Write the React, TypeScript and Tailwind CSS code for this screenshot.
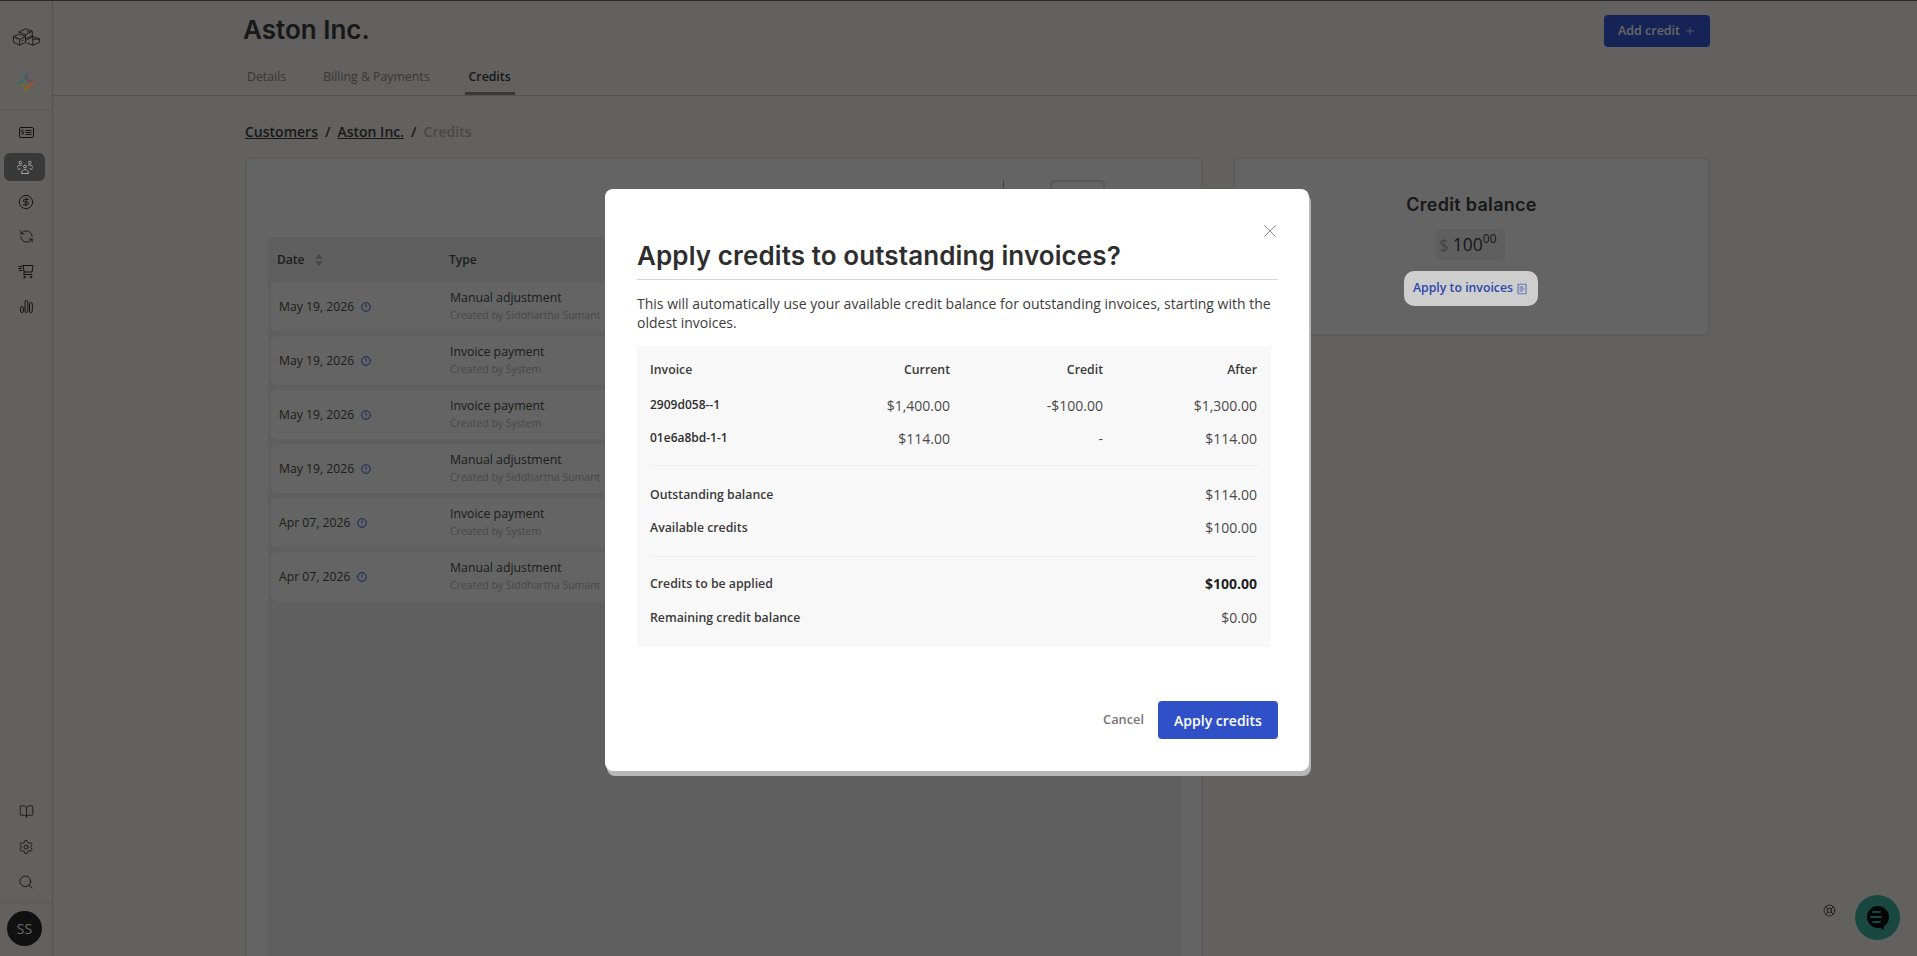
import React from "react";
import {
  BookOpen,
  CircleDollarSign,
  LifeBuoy,
  Plus,
  ReceiptText,
  RefreshCcw,
  Search,
  Settings,
  X,
} from "lucide-react";

const rows = [
  { date: "May 19, 2026", type: "Manual adjustment", by: "Created by Siddhartha Sumant" },
  { date: "May 19, 2026", type: "Invoice payment", by: "Created by System" },
  { date: "May 19, 2026", type: "Invoice payment", by: "Created by System" },
  { date: "May 19, 2026", type: "Manual adjustment", by: "Created by Siddhartha Sumant" },
  { date: "Apr 07, 2026", type: "Invoice payment", by: "Created by System" },
  { date: "Apr 07, 2026", type: "Manual adjustment", by: "Created by Siddhartha Sumant" },
];

const invoices = [
  { id: "2909d058--1", current: "$1,400.00", credit: "-$100.00", after: "$1,300.00" },
  { id: "01e6a8bd-1-1", current: "$114.00", credit: "-", after: "$114.00" },
];

function Logo() {
  return (
    <svg width="29" height="20" viewBox="0 0 30 20" fill="none" stroke="#1c1c1c" strokeWidth="0.8" strokeLinejoin="round">
      <path d="M1.5 9.5 8 7l6 2.5v6L8 18.5l-6.5-3z" />
      <path d="M1.5 9.5 8 12.5l6-3M8 12.5v6" />
      <path d="M7 5l7-3.5 7 2.5v5l-7 3" />
      <path d="M7 5l7 2.5 7-3.5M14 7.5v3" />
      <path d="M15 13l6.5-3.5 7 2.5v3.5L21.5 18.5 15 16" />
      <path d="M21.5 12.5l7-.5M21.5 12.5v6M21 9l.5 3.5" />
      <path d="M4 11l2 1M10 14l2-1M16 4l3 1" />
    </svg>
  );
}

function Sparkle() {
  return (
    <svg width="18" height="20" viewBox="0 0 18 20" fill="none" strokeWidth="1.8" strokeLinecap="round" className="relative z-50">
      <path d="M9 1.5C9.6 6 12 9 16.5 10" stroke="#6b4a5a" />
      <path d="M16.5 10C12 11 9.6 14 9 18.5" stroke="#a8551f" />
      <path d="M9 18.5C8.4 14 6 11 1.5 10" stroke="#6f6a30" />
      <path d="M1.5 10C6 9 8.4 6 9 1.5" stroke="#2a6a78" />
    </svg>
  );
}

function BillCard() {
  return (
    <svg width="15" height="11" viewBox="0 0 15 11" fill="none" stroke="currentColor" strokeWidth="1">
      <rect x="0.5" y="0.5" width="14" height="10" rx="1.5" />
      <path d="M6.5 3.5h6M6.5 5.5h6M6.5 7.5h6" />
      <path d="M4.5 3.2H3.2a.9.9 0 0 0 0 1.8h.6a.9.9 0 0 1 0 1.800H2.4" />
    </svg>
  );
}

function PeopleIcon() {
  return (
    <svg width="16" height="15" viewBox="0 0 16 15" fill="none" stroke="currentColor" strokeWidth="1">
      <circle cx="3.2" cy="2.5" r="1.3" />
      <circle cx="12.8" cy="2.5" r="1.3" />
      <circle cx="8" cy="6.5" r="1.4" />
      <path d="M0.5 7.5c0-1.500 1-2.500 2.700-2.500 1 0 1.600.3 2 .8M15.500 7.500c0-1.500-1-2.500-2.700-2.500-1 0-1.600.3-2 .8" />
      <path d="M4.500 13.500c0-2.300 1.300-4 3.500-4s3.500 1.700 3.500 4zM0.500 9h3M12.500 9h3" />
    </svg>
  );
}

function CartIcon() {
  return (
    <svg width="16" height="15" viewBox="0 0 16 15" fill="none" stroke="currentColor" strokeWidth="1" strokeLinecap="round" strokeLinejoin="round">
      <path d="M5 1.500h10l-1 6.500H6.200L5 1.500zM6.200 8l-.5 2.500h8.300" />
      <path d="M1 2.500h2.500M0.500 4.500h3M1.500 6.500h2.500" />
      <circle cx="6.500" cy="13" r="0.8" />
      <circle cx="13" cy="13" r="0.8" />
    </svg>
  );
}

function BarsIcon() {
  return (
    <svg width="13" height="13" viewBox="0 0 13 13" fill="none" stroke="currentColor" strokeWidth="1">
      <rect x="0.5" y="6.5" width="2.8" height="6" rx="1.4" />
      <rect x="5" y="0.5" width="2.8" height="12" rx="1.4" />
      <rect x="9.5" y="2.5" width="2.8" height="10" rx="1.4" />
    </svg>
  );
}

function InfoDot() {
  return (
    <svg width="10" height="10" viewBox="0 0 10 10" fill="none" stroke="#3658d8" strokeWidth="1" className="ml-[7px]">
      <circle cx="5" cy="5" r="4.3" />
      <path d="M5 2.5v3" />
      <path d="M5 7v.6" />
    </svg>
  );
}

function Sidebar() {
  const iconBox = "flex h-[35px] items-center justify-center text-[#2e2e2e]";
  return (
    <div className="flex h-full w-[53px] shrink-0 flex-col border-r border-[#cfcdca]">
      <div className="flex h-[59px] items-end justify-center pb-[12px]">
        <Logo />
      </div>
      <div className="flex h-[51px] items-start justify-center border-b border-[#e2e0dc] pt-[14px]">
        <Sparkle />
      </div>
      <div className="mt-[5px] flex flex-col">
        <div className={iconBox}>
          <BillCard />
        </div>
        <div className="mx-[4px] mt-[3px] flex h-[28px] w-[41px] items-center justify-center rounded-[6px] bg-[#8e8e8e] text-[#a6a6a6]">
          <span className="relative z-50 flex">
            <PeopleIcon />
          </span>
        </div>
        <div className={`${iconBox} mt-[3px]`}>
          <CircleDollarSign size={16} strokeWidth={1.4} />
        </div>
        <div className={iconBox}>
          <RefreshCcw size={15} strokeWidth={1.4} />
        </div>
        <div className={iconBox}>
          <CartIcon />
        </div>
        <div className={iconBox}>
          <BarsIcon />
        </div>
      </div>
      <div className="mt-auto flex flex-col">
        <div className={iconBox}>
          <BookOpen size={15} strokeWidth={1.3} />
        </div>
        <div className={iconBox}>
          <Settings size={16} strokeWidth={1.3} />
        </div>
        <div className={iconBox}>
          <Search size={16} strokeWidth={1.4} />
        </div>
        <div className="mt-[3px] flex h-[54px] items-center justify-center border-t border-[#e2e0dc] pb-[3px] pr-[3px]">
          <div className="flex h-[35px] w-[35px] items-center justify-center rounded-full bg-[#2b2b2b] text-[14px] text-[#ffffff]">
            SS
          </div>
        </div>
      </div>
    </div>
  );
}

function Header() {
  return (
    <div className="h-[96px] border-b border-[#d2d0cd] pl-[190px] pr-[207px]">
      <div className="flex items-start justify-between pt-[14px]">
        <h1 className="font-['Inter'] text-[26px] leading-[32px] font-semibold text-[#3c3c3c]">Aston Inc.</h1>
        <button className="mt-px flex h-[32px] w-[106px] items-center justify-center gap-[4px] rounded-[4px] bg-[#3658d8] text-[12.5px] font-semibold text-white">
          Add credit
          <Plus size={12} strokeWidth={1.5} />
        </button>
      </div>
      <div className="mt-[15px] flex items-start pl-[1px] text-[12.3px] text-[#8e8e8e]">
        <div className="h-[31px] px-[3px] pt-[6px]">Details</div>
        <div className="ml-[31px] h-[31px] px-[3px] pt-[6px]">Billing &amp; Payments</div>
        <div className="ml-[32px] h-[33px] border-b-[3px] border-[#8c8c8c] px-[4px] pt-[6px] font-semibold text-[#3a3a3a]">
          Credits
        </div>
      </div>
    </div>
  );
}

function CreditsTable() {
  return (
    <div className="ml-[21px] mr-[20px] h-[800px] rounded-t-[6px] bg-[#ededed]">
      <div className="flex h-[45px] items-center pl-[9px] text-[12px] font-semibold text-[#4b4b4b]">
        <div className="flex w-[172px] items-center gap-[11px]">
          Date
          <svg width="8" height="12" viewBox="0 0 8 12" fill="#b5b5b5">
            <path d="M4 0 8 4.8H0zM4 12 0 7.2h8z" />
          </svg>
        </div>
        <div>Type</div>
      </div>
      <div className="flex flex-col gap-[5px] px-[3px]">
        {rows.map((row, i) => (
          <div key={i} className="flex h-[49px] items-center rounded-[6px] bg-[#f9f9f9] pl-[8px]">
            <div className="mt-[2px] flex w-[171px] items-center text-[12.2px] text-[#4b4b4b]">
              {row.date}
              <InfoDot />
            </div>
            <div className="-mt-[2px]">
              <div className="text-[12.3px] leading-[18px] text-[#4b4b4b]">{row.type}</div>
              <div className="text-[10.5px] leading-[16px] text-[#b5b5b5]">{row.by}</div>
            </div>
          </div>
        ))}
      </div>
    </div>
  );
}

function BalanceCard() {
  return (
    <div className="flex h-[179px] w-[477px] flex-col items-center rounded-[6px] border-2 border-[#e6e6e6] bg-[#fbfbfb] pt-[34px]">
      <div className="font-['Inter'] text-[18px] leading-[24px] font-semibold tracking-[0.3px] text-[#3c3c3c]">
        Credit balance
      </div>
      <div className="mr-[2px] mt-[12px] flex h-[31px] w-[69px] items-center gap-[4px] rounded-[4px] bg-[#ededed] pl-[3px] text-[#3c3c3c]">
        <span className="text-[17px] text-[#a9a9a9]">$</span>
        <span className="whitespace-nowrap text-[17.5px]">
          100<sup className="relative top-[-2px] align-super text-[12px] leading-none">00</sup>
        </span>
      </div>
      <button className="relative z-50 mr-[2px] mt-[11px] flex h-[35px] w-[134px] items-center justify-center gap-[3px] rounded-[10px] bg-[#cecece] text-[12.3px] font-semibold text-[#2c47ac]">
        Apply to invoices
        <ReceiptText size={12} strokeWidth={1.5} />
      </button>
    </div>
  );
}

function SummaryRow({ label, value, bold }: { label: string; value: string; bold?: boolean }) {
  return (
    <div className="flex h-[20px] items-center justify-between">
      <span className="mt-[2px] text-[12.3px] font-semibold text-[#3a3a3a]">{label}</span>
      <span className={bold ? "text-[14px] font-bold text-[#1f1f1f]" : "text-[14px] text-[#4a4a4a]"}>{value}</span>
    </div>
  );
}

function ApplyModal() {
  return (
    <div className="absolute left-[605px] top-[189px] z-50 h-[582px] w-[704px] rounded-[8px] bg-white pl-[32px] pr-[31px] shadow-[2px_5px_0_0_#b7b7b7]">
      <button className="absolute right-[28px] top-[31px] text-[#666666]">
        <X size={22} strokeWidth={0.8} />
      </button>
      <h2 className="border-b border-[#d6d6d6] pb-[8px] pt-[51px] font-['Inter'] text-[26px] leading-[31px] font-semibold tracking-[0.1px] text-[#2e2e2e]">
        Apply credits to outstanding invoices?
      </h2>
      <p className="mt-[14px] text-[14px] leading-[19px] text-[#3c3c3c]">
        This will automatically use your available credit balance for outstanding invoices, starting with the
        <br />
        oldest invoices.
      </p>
      <div className="mt-[14px] h-[301px] w-[634px] bg-[#f8f8f8] pl-[13px] pr-[14px] pt-[14px]">
        <div className="grid h-[20px] grid-cols-[150px_150px_153px_154px] items-center text-right text-[12.3px] font-semibold text-[#3a3a3a]">
          <span className="text-left">Invoice</span>
          <span>Current</span>
          <span>Credit</span>
          <span>After</span>
        </div>
        <div className="mt-[15px] flex flex-col gap-[13px]">
          {invoices.map((inv) => (
            <div key={inv.id} className="grid h-[20px] grid-cols-[150px_150px_153px_154px] items-center text-right text-[14px] text-[#4a4a4a]">
              <span className="-mt-[1px] text-left text-[12px] font-semibold text-[#2e2e2e]">{inv.id}</span>
              <span>{inv.current}</span>
              <span>{inv.credit}</span>
              <span>{inv.after}</span>
            </div>
          ))}
        </div>
        <div className="mt-[17px] border-t border-[#eeeeee]" />
        <div className="mt-[18px] flex flex-col gap-[13px]">
          <SummaryRow label="Outstanding balance" value="$114.00" />
          <SummaryRow label="Available credits" value="$100.00" />
        </div>
        <div className="mt-[19px] border-t border-[#eeeeee]" />
        <div className="mt-[16px] flex flex-col gap-[14px]">
          <SummaryRow label="Credits to be applied" value="$100.00" bold />
          <SummaryRow label="Remaining credit balance" value="$0.00" />
        </div>
      </div>
      <div className="mt-[54px] flex items-center justify-end gap-[14px]">
        <button className="text-[12.8px] font-semibold text-[#777777]">Cancel</button>
        <button className="h-[38px] w-[120px] rounded-[4px] bg-[#2f50c6] text-[14px] font-semibold text-white">
          Apply credits
        </button>
      </div>
    </div>
  );
}

export default function App() {
  return (
    <div className="relative h-[956px] w-[1917px] overflow-hidden bg-[#f4f2ee] font-['Open_Sans','Noto_Sans',sans-serif]">
      <div className="flex h-full">
        <Sidebar />
        <div className="min-w-0 flex-1">
          <Header />
          <div className="pl-[192px] pr-[207px]">
            <div className="flex h-[61px] items-center gap-[7px] pt-[10px] text-[14px] font-semibold text-[#3e3e3e]">
              <span className="underline">Customers</span>
              <span>/</span>
              <span className="underline">Aston Inc.</span>
              <span>/</span>
              <span className="text-[#b5b5b5]">Credits</span>
            </div>
            <div className="flex items-start gap-[30px]">
              <div className="h-[900px] w-[958px] rounded-[6px] border-2 border-[#e6e6e6] bg-[#fbfbfb]">
                <div className="flex h-[78px] items-start justify-end gap-[46px] pr-[96px] pt-[21px]">
                  <div className="h-[20px] w-px bg-[#a8a8a8]" />
                  <div className="h-[34px] w-[55px] rounded-[4px] border-2 border-[#dddddd]" />
                </div>
                <CreditsTable />
              </div>
              <BalanceCard />
            </div>
          </div>
        </div>
      </div>
      <div className="absolute bottom-[39px] right-[81px] text-[#333333]">
        <LifeBuoy size={13} strokeWidth={1.5} />
      </div>
      <div className="absolute bottom-[16px] right-[17px] flex h-[45px] w-[45px] items-center justify-center rounded-full bg-[#3cb59f]">
        <svg width="24" height="26" viewBox="0 0 24 26">
          <path d="M12 1a11 11 0 0 1 11 11c0 4-2 7.5-5 9.3l-.3 3.7-3.700-2.200a11 11 0 0 1-2 .2 11 11 0 0 1 0-22z" fill="#111111" />
          <path d="M7 7h7M5 12h10M7 17h7" stroke="#3cb59f" strokeWidth="1.8" strokeLinecap="round" />
        </svg>
      </div>
      <div className="absolute inset-0 z-40 bg-[rgba(0,0,0,0.6)]" />
      <div className="absolute inset-x-0 top-0 z-50 h-px bg-[#2c2828]" />
      <ApplyModal />
    </div>
  );
}
